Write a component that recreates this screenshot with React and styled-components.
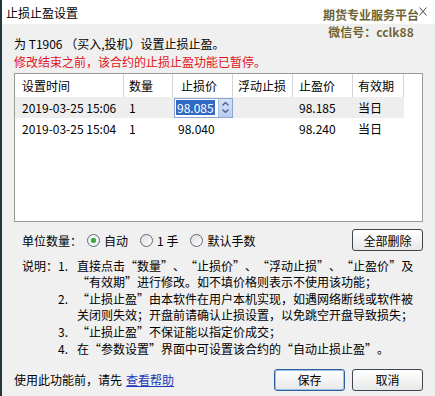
import React from "react";
import styled, { createGlobalStyle } from "styled-components";

const GlobalStyle = createGlobalStyle`
  html, body {
    margin: 0;
    padding: 0;
    background: #f0f0f0;
  }
  body {
    font-family: "Noto Sans CJK SC", "Liberation Sans", sans-serif;
    font-size: 12px;
    color: #000;
  }
`;

const Window = styled.div`
  position: relative;
  width: 435px;
  height: 396px;
  box-sizing: border-box;
  border-left: 2px solid #22343c;
  background: #f0f0f0;
  overflow: hidden;
`;

const TitleBar = styled.div`
  height: 24px;
  background: #fff;
  display: flex;
  align-items: center;
  padding-left: 4px;
  font-size: 12px;
  position: relative;
`;

const CloseBtn = styled.svg`
  position: absolute;
  right: 8px;
  top: 7px;
`;

const Watermark = styled.div`
  position: absolute;
  top: 6px;
  right: 16px;
  z-index: 2;
  display: flex;
  flex-direction: column;
  align-items: center;
  font-weight: 700;
  font-size: 12px;
  line-height: 17px;
  color: #6d6332;
  text-shadow: 0 0 2px #fff, 0 0 1px #fff;
`;

const Body = styled.div`
  padding: 11px 12px 0 12px;
`;

const Line = styled.div`
  height: 18px;
  line-height: 18px;
  white-space: nowrap;
  color: ${(p) => (p.$warn ? "#e3141c" : "#000")};
`;

const Table = styled.div`
  margin-top: 2px;
  width: 409px;
  height: 149px;
  box-sizing: border-box;
  border: 1px solid #9a9a9a;
  background: #fff;
`;

const cols = "109px 49px 60px 60px 60px 51px";

const HeaderRow = styled.div`
  display: grid;
  grid-template-columns: ${cols} 1fr;
  height: 23px;
`;

const HeaderCell = styled.div`
  display: flex;
  align-items: center;
  padding-left: ${(p) => p.$pad || 6}px;
  border-right: 1px solid #d4d4d4;
  white-space: nowrap;
  &:last-child {
    border-right: none;
  }
`;

const Row = styled.div`
  display: grid;
  grid-template-columns: ${cols};
  height: 21px;
  width: 389px;
  background: ${(p) => (p.$active ? "#eeeeee" : "#fff")};
`;

const Cell = styled.div`
  display: flex;
  align-items: center;
  padding-left: ${(p) => p.$pad ?? 6}px;
  white-space: nowrap;
`;

const SpinBox = styled.div`
  display: flex;
  align-items: stretch;
  width: 59px;
  height: 20px;
  box-sizing: border-box;
  border: 1px solid #8aa6d0;
  background: #fff;
`;

const SpinText = styled.div`
  flex: 1;
  display: flex;
  align-items: center;
  padding-left: 1px;
  span {
    background: #3169c6;
    color: #fff;
    line-height: 15px;
    padding: 0 1px;
  }
`;

const SpinArrows = styled.div`
  width: 13px;
  background: linear-gradient(#d5e2f7, #b9cdf0);
  border-left: 1px solid #a9bde0;
  display: flex;
  flex-direction: column;
  align-items: center;
  justify-content: center;
  gap: 3px;
`;

const UnitRow = styled.div`
  margin-top: 7px;
  height: 22px;
  display: flex;
  align-items: center;
  padding-left: 8px;
  white-space: nowrap;
`;

const Radio = styled.span`
  display: inline-flex;
  align-items: center;
  margin-left: ${(p) => p.$ml || 0}px;
  &::before {
    content: "";
    box-sizing: border-box;
    width: 13px;
    height: 13px;
    border-radius: 50%;
    border: 1px solid #5d6a78;
    background: ${(p) =>
      p.$checked
        ? "radial-gradient(circle, #2e9e3a 0, #49b34e 2.5px, #f4f4f4 3px)"
        : "linear-gradient(135deg, #dcdcdc, #ffffff)"};
    margin-right: 4px;
  }
`;

const Button = styled.button`
  width: 71px;
  height: 22px;
  box-sizing: border-box;
  border: 1px solid #3d4650;
  border-radius: 3px;
  background: linear-gradient(#ffffff, #f2f2f2 60%, #e6e6e6);
  font-family: "Noto Sans CJK SC", sans-serif;
  font-size: 12px;
  color: #000;
  padding: 0;
  margin-left: ${(p) => p.$ml || 0}px;
  box-shadow: ${(p) => (p.$default ? "inset 0 0 0 1px #9cc0ec" : "none")};
  border-color: ${(p) => (p.$default ? "#2f5f9a" : "#3d4650")};
`;

const Spacer = styled.div`
  flex: 1;
`;

const Notes = styled.div`
  margin-top: 7px;
  padding-left: 8px;
  display: grid;
  grid-template-columns: 36px 19px 1fr;
  row-gap: 1px;
  line-height: 16px;
  white-space: nowrap;
`;

// full-width quote marks, the way the dialog font draws them
const Quote = styled.span`
  display: inline-block;
  width: 12px;
  text-align: ${(p) => (p.$open ? "right" : "left")};
`;

const Footer = styled.div`
  margin-top: 11px;
  height: 23px;
  display: flex;
  align-items: center;
`;

const Link = styled.a`
  color: #1f36b8;
  text-decoration: underline;
  margin-left: 4px;
`;

const rows = [
  { time: "2019-03-25 15:06", qty: "1", stop: "98.085", profit: "98.185", valid: "当日", active: true },
  { time: "2019-03-25 15:04", qty: "1", stop: "98.040", profit: "98.240", valid: "当日" },
];

const notes = [
  ["1.", ["直接点击“数量”、“止损价”、“浮动止损”、“止盈价”及", "“有效期”进行修改。如不填价格则表示不使用该功能；"]],
  ["2.", ["“止损止盈”由本软件在用户本机实现，如遇网络断线或软件被", "关闭则失效；开盘前请确认止损设置，以免跳空开盘导致损失；"]],
  ["3.", ["“止损止盈”不保证能以指定价成交；"]],
  ["4.", ["在“参数设置”界面中可设置该合约的“自动止损止盈”。"]],
];

function withQuotes(text) {
  return text.split(/([“”])/).map((part, i) =>
    part === "“" ? (
      <Quote key={i} $open>“</Quote>
    ) : part === "”" ? (
      <Quote key={i}>”</Quote>
    ) : (
      part
    )
  );
}

export default function App() {
  return (
    <Window>
      <GlobalStyle />
      <TitleBar>
        止损止盈设置
        <CloseBtn width="8" height="9" viewBox="0 0 8 9">
          <path d="M0.5 0.5 L7.5 8.5 M7.5 0.5 L0.5 8.5" stroke="#444" strokeWidth="1" />
        </CloseBtn>
      </TitleBar>
      <Watermark>
        <div>期货专业服务平台</div>
        <div>微信号：cclk88</div>
      </Watermark>
      <Body>
        <Line>为 T1906 （买入,投机）设置止损止盈。</Line>
        <Line $warn>修改结束之前，该合约的止损止盈功能已暂停。</Line>
        <Table>
          <HeaderRow>
            <HeaderCell $pad={7}>设置时间</HeaderCell>
            <HeaderCell $pad={5}>数量</HeaderCell>
            <HeaderCell $pad={8}>止损价</HeaderCell>
            <HeaderCell $pad={5}>浮动止损</HeaderCell>
            <HeaderCell $pad={6}>止盈价</HeaderCell>
            <HeaderCell $pad={5}>有效期</HeaderCell>
            <HeaderCell />
          </HeaderRow>
          {rows.map((r) => (
            <Row key={r.time} $active={r.active}>
              <Cell $pad={7}>{r.time}</Cell>
              <Cell $pad={5}>{r.qty}</Cell>
              {r.active ? (
                <Cell $pad={1}>
                  <SpinBox>
                    <SpinText>
                      <span>{r.stop}</span>
                    </SpinText>
                    <SpinArrows>
                      <svg width="7" height="4" viewBox="0 0 7 4">
                        <path d="M0.5 3.5 L3.5 0.5 L6.5 3.5" fill="none" stroke="#4a5f88" strokeWidth="1.3" />
                      </svg>
                      <svg width="7" height="4" viewBox="0 0 7 4">
                        <path d="M0.5 0.5 L3.5 3.5 L6.5 0.5" fill="none" stroke="#4a5f88" strokeWidth="1.3" />
                      </svg>
                    </SpinArrows>
                  </SpinBox>
                </Cell>
              ) : (
                <Cell $pad={5}>{r.stop}</Cell>
              )}
              <Cell />
              <Cell $pad={6}>{r.profit}</Cell>
              <Cell $pad={5}>{r.valid}</Cell>
            </Row>
          ))}
        </Table>
        <UnitRow>
          单位数量：
          <Radio $checked $ml={5}>自动</Radio>
          <Radio $ml={12}>1 手</Radio>
          <Radio $ml={12}>默认手数</Radio>
          <Spacer />
          <Button>全部删除</Button>
        </UnitRow>
        <Notes>
          {notes.map(([n, lines], i) => (
            <React.Fragment key={n}>
              <div>{i === 0 ? "说明：" : ""}</div>
              <div>{n}</div>
              <div>
                {lines.map((l, j) => (
                  <div key={j}>{withQuotes(l)}</div>
                ))}
              </div>
            </React.Fragment>
          ))}
        </Notes>
        <Footer>
          使用此功能前，请先<Link href="#">查看帮助</Link>
          <Spacer />
          <Button $default>保存</Button>
          <Button $ml={7}>取消</Button>
        </Footer>
      </Body>
    </Window>
  );
}
